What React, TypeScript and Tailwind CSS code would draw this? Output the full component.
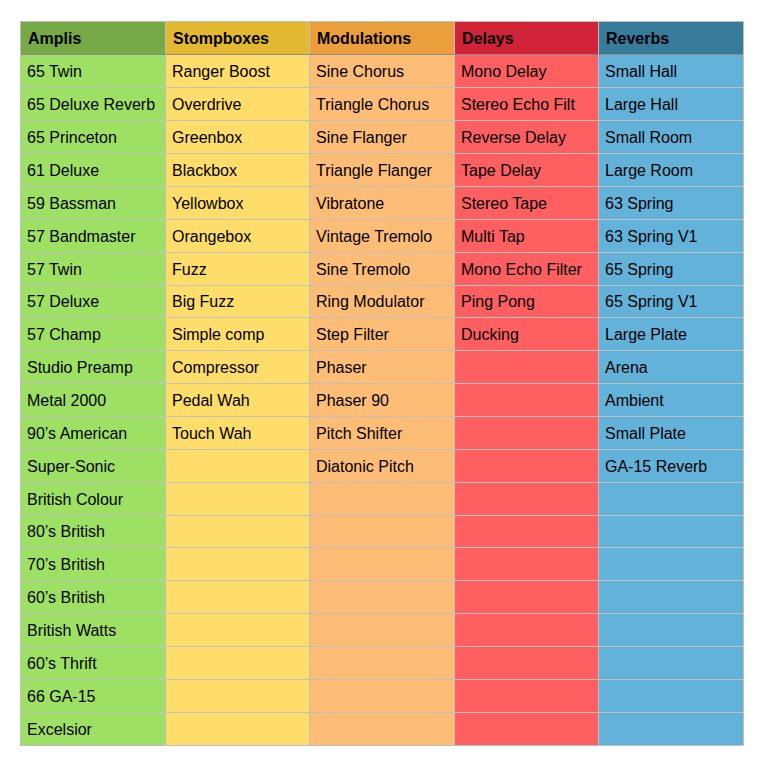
const COLUMNS = [
  {
    title: 'Amplis',
    head: 'bg-[#77a946]',
    body: 'bg-[#9ee063]',
    items: [
      '65 Twin', '65 Deluxe Reverb', '65 Princeton', '61 Deluxe', '59 Bassman', '57 Bandmaster',
      '57 Twin', '57 Deluxe', '57 Champ', 'Studio Preamp', 'Metal 2000', '90’s American',
      'Super-Sonic', 'British Colour', '80’s British', '70’s British', '60’s British',
      'British Watts', '60’s Thrift', '66 GA-15', 'Excelsior',
    ],
  },
  {
    title: 'Stompboxes',
    head: 'bg-[#e4b932]',
    body: 'bg-[#fedd6b]',
    items: [
      'Ranger Boost', 'Overdrive', 'Greenbox', 'Blackbox', 'Yellowbox', 'Orangebox', 'Fuzz',
      'Big Fuzz', 'Simple comp', 'Compressor', 'Pedal Wah', 'Touch Wah',
    ],
  },
  {
    title: 'Modulations',
    head: 'bg-[#eb9f3c]',
    body: 'bg-[#febd77]',
    items: [
      'Sine Chorus', 'Triangle Chorus', 'Sine Flanger', 'Triangle Flanger', 'Vibratone',
      'Vintage Tremolo', 'Sine Tremolo', 'Ring Modulator', 'Step Filter', 'Phaser', 'Phaser 90',
      'Pitch Shifter', 'Diatonic Pitch',
    ],
  },
  {
    title: 'Delays',
    head: 'bg-[#d02337]',
    body: 'bg-[#fe5f61]',
    items: [
      'Mono Delay', 'Stereo Echo Filt', 'Reverse Delay', 'Tape Delay', 'Stereo Tape', 'Multi Tap',
      'Mono Echo Filter', 'Ping Pong', 'Ducking',
    ],
  },
  {
    title: 'Reverbs',
    head: 'bg-[#377b9b]',
    body: 'bg-[#63b2da]',
    items: [
      'Small Hall', 'Large Hall', 'Small Room', 'Large Room', '63 Spring', '63 Spring V1',
      '65 Spring', '65 Spring V1', 'Large Plate', 'Arena', 'Ambient', 'Small Plate', 'GA-15 Reverb',
    ],
  },
]

const ROWS = 21

export default function App() {
  return (
    <div className="w-[765px] h-[765px] bg-white pt-[21px] pl-[20px] font-['Liberation_Sans',Arial,sans-serif] text-[16px] text-black">
      <div className="w-[724px] flex flex-col border border-[#c0c0c0] bg-[#c0c0c0]">
        <div className="grid grid-cols-[144px_143px_144px_143px_144px] gap-x-px h-[32px]">
          {COLUMNS.map((col) => (
            <div key={col.title} className={`${col.head} flex items-center pl-[7px] pt-px font-bold`}>
              {col.title}
            </div>
          ))}
        </div>
        <div className="h-px bg-[#8c8c8c]" />
        {/* 19 rows of 32px and 2 of 31px, so the grid lands on the bottom edge at 745 */}
        <div className="grid grid-cols-[144px_143px_144px_143px_144px] grid-rows-[32px_32px_32px_32px_32px_32px_32px_31px_32px_32px_32px_32px_32px_32px_31px_32px_32px_32px_32px_32px_32px] gap-px">
          {Array.from({ length: ROWS }).map((_, r) =>
            COLUMNS.map((col) => (
              <div key={`${col.title}-${r}`} className={`${col.body} flex items-center pl-[6px] pt-px whitespace-nowrap overflow-hidden`}>
                {col.items[r] ?? ''}
              </div>
            ))
          )}
        </div>
      </div>
    </div>
  )
}
